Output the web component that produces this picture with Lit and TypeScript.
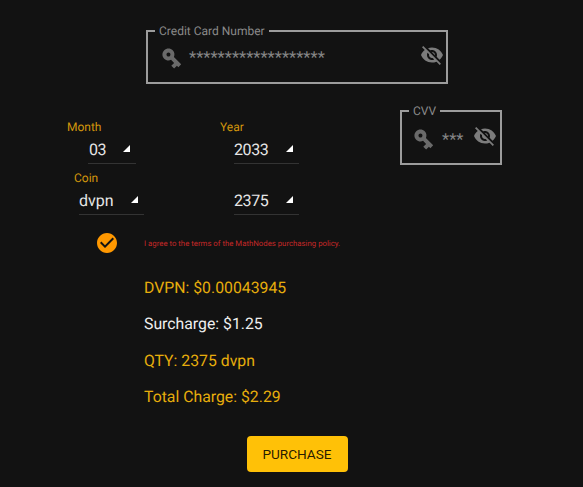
import { LitElement, html, css, svg } from "lit";
import { customElement } from "lit/decorators.js";

const KEY = svg`<path d="M12.65 10C11.83 7.67 9.61 6 7 6c-3.31 0-6 2.69-6 6s2.69 6 6 6c2.61 0 4.83-1.67 5.65-4H17v4h4v-4h2v-4H12.65zM7 14c-1.1 0-2-.9-2-2s.9-2 2-2 2 .9 2 2-.9 2-2 2z"/>`;
const EYE = svg`<path d="M12 7c2.76 0 5 2.24 5 5 0 .65-.13 1.26-.36 1.83l2.92 2.92c1.51-1.26 2.7-2.89 3.43-4.75-1.73-4.39-6-7.5-11-7.5-1.4 0-2.74.25-3.98.7l2.16 2.16C10.74 7.13 11.35 7 12 7zM2 4.27l2.28 2.28.46.46C3.08 8.3 1.78 10.02 1 12c1.73 4.39 6 7.5 11 7.5 1.55 0 3.03-.3 4.38-.84l.42.42L19.73 22 21 20.73 3.27 3 2 4.27zM7.53 9.8l1.55 1.55c-.05.21-.08.43-.08.65 0 1.66 1.34 3 3 3 .22 0 .44-.03.65-.08l1.55 1.55c-.67.33-1.41.53-2.2.53-2.76 0-5-2.24-5-5 0-.79.2-1.53.53-2.2zm4.31-.78l3.15 3.15.02-.16c0-1.66-1.34-3-3-3l-.17.01z"/>`;
const CHECK = svg`<path d="M12 2C6.48 2 2 6.48 2 12s4.48 10 10 10 10-4.48 10-10S17.52 2 12 2zm-2 15l-5-5 1.41-1.41L10 14.17l7.59-7.59L19 8l-9 9z"/>`;

@customElement("app-root")
export class AppRoot extends LitElement {
  static styles = css`
    :host {
      display: block;
      height: 487px;
      overflow: hidden;
      background: #121212;
      font-family: Roboto, sans-serif;
      color: #fff;
      text-rendering: geometricPrecision;
    }
    fieldset {
      margin: 0;
      border: 2px solid #9c9c9c;
      box-sizing: border-box;
      display: flex;
      align-items: center;
      min-width: 0;
    }
    legend {
      font-size: 12px;
      line-height: 15px;
      color: #8a8a8a;
      padding: 2px 4px 0;
      margin-left: -5px;
    }
    .cvv legend { margin-left: -3px; }
    .icon { fill: currentColor; display: block; flex: none; }
    .key { color: #6a6a6a; transform: rotate(45deg); }
    .eye { color: #7c7c7c; position: relative; top: -3px; }
    .mask { color: #858585; font-size: 16.6px; padding-top: 2px; }

    .top { padding: 22px 0 0 146px; height: 102px; box-sizing: border-box; }
    .card { width: 302px; height: 62px; padding: 0 2px 6px 12px; }
    .card .mask { margin-left: 5px; flex: 1; }

    .mid { display: flex; align-items: flex-start; }
    .selects {
      margin: 18px 0 0 67px;
      width: 333px;
      display: grid;
      grid-template-columns: 153px 80px;
      grid-auto-rows: 51px;
    }
    .ctl label { display: block; font-size: 12px; line-height: 14px; color: #d2960c; }
    .sel {
      box-sizing: border-box;
      height: 30px;
      display: flex;
      align-items: center;
      justify-content: space-between;
      font-size: 16px;
      color: #e6e6e6;
      border-bottom: 1px solid #333;
      padding: 2px 6px 0 0;
    }
    .num { letter-spacing: -0.4px; }
    .caret { width: 0; height: 0; border-left: 7px solid transparent; border-bottom: 7px solid #fff; margin-top: -2px; }
    .month { margin-left: 21px; width: 48px; padding-left: 1px; }
    .year { margin-left: 14px; width: 65px; }
    .coinl { margin-left: 7px; }
    .coin { margin-left: 12px; width: 65px; }
    .cvv { width: 102px; height: 63px; margin-top: 0; padding: 0 3px 4px 10px; }
    .cvv .mask { margin: 0 4px 0 6px; flex: 1; }

    .agree { display: flex; align-items: center; margin: 9px 0 0 95px; height: 24px; }
    .agree .icon { color: #ff9800; }
    .agree span { margin-left: 25px; font-size: 7.8px; color: #c62828; }

    .row { margin: 0 0 0 144px; font-size: 15.8px; line-height: 36.4px; color: #e6ad0c; }
    .row.w { color: #eee; }
    .rows { margin-top: 15px; }

    .actions { display: flex; justify-content: center; padding: 20px 0 0 11px; }
    button {
      height: 36px;
      width: 101px;
      border: 0;
      border-radius: 4px;
      background: #ffc107;
      color: rgba(0, 0, 0, 0.87);
      font: 400 13.6px Roboto, sans-serif;
    }
  `;

  private icon(p: unknown, cls: string, size = 24) {
    return html`<svg class="icon ${cls}" width=${size} height=${size} viewBox="0 0 24 24">${p}</svg>`;
  }

  render() {
    return html`
      <div class="top">
        <fieldset class="card">
          <legend>Credit Card Number</legend>
          ${this.icon(KEY, "key")}
          <span class="mask">*******************</span>
          ${this.icon(EYE, "eye")}
        </fieldset>
      </div>
      <div class="mid">
        <div class="selects">
          <div class="ctl"><label>Month</label><div class="sel month num">03<i class="caret"></i></div></div>
          <div class="ctl"><label>Year</label><div class="sel year num">2033<i class="caret"></i></div></div>
          <div class="ctl"><label class="coinl">Coin</label><div class="sel coin">dvpn<i class="caret"></i></div></div>
          <div class="ctl"><label>&nbsp;</label><div class="sel year num">2375<i class="caret"></i></div></div>
        </div>
        <fieldset class="cvv">
          <legend>CVV</legend>
          ${this.icon(KEY, "key")}
          <span class="mask">***</span>
          ${this.icon(EYE, "eye")}
        </fieldset>
      </div>
      <div class="agree">${this.icon(CHECK, "")}<span>I agree to the terms of the MathNodes purchasing policy.</span></div>
      <div class="rows">
        <div class="row">DVPN: $0.00043945</div>
        <div class="row w">Surcharge: $1.25</div>
        <div class="row">QTY: 2375 dvpn</div>
        <div class="row">Total Charge: $2.29</div>
      </div>
      <div class="actions"><button>PURCHASE</button></div>
    `;
  }
}
